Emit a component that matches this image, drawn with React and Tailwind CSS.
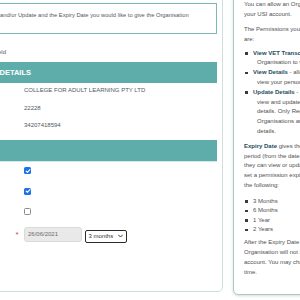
const Bullet = () => (
  <span className="absolute left-[-12px] top-[3.5px] w-[2.5px] h-[2.5px] bg-[#3a3a3a]" />
);

const Checkbox = ({ checked }) =>
  checked ? (
    <div className="w-[7px] h-[7px] rounded-[1.5px] bg-[#1a73e8] flex items-center justify-center">
      <svg width="6" height="6" viewBox="0 0 10 10" fill="none">
        <path d="M2 5.3l2 2L8.2 2.8" stroke="white" strokeWidth="1.8" strokeLinecap="round" strokeLinejoin="round" />
      </svg>
    </div>
  ) : (
    <div className="w-[7px] h-[7px] rounded-[1.5px] border border-[#8a8a8a] bg-white" />
  );

const App = () => {
  return (
    <div className="w-[300px] h-[300px] overflow-hidden bg-white font-['Liberation_Sans',Arial,sans-serif] text-[6px] leading-[10px]">
      <div className="flex items-start">
        {/* left form card */}
        <div className="-ml-[16px] -mt-[4px] w-[239px] h-[296px] shrink-0 border border-[#cfdfde] rounded-b-[5px] px-[5px] pt-[6px]">
          <div className="h-[31px] border border-[#79b9b6] pl-[9px] pt-[6px] text-[#4f585e] text-[5.75px] whitespace-nowrap">
            and/or Update and the Expiry Date you would like to give the Organisation
          </div>

          <div className="mt-[13px] w-[16px] flex justify-end whitespace-nowrap text-[#4f585e]">
            * Indicates mandatory field
          </div>

          <div className="mt-[5px] h-[21px] bg-[#5fadaa] flex items-center">
            <div className="w-[41px] flex justify-end whitespace-nowrap text-white font-bold text-[7.5px]">
              ORGANISATION DETAILS
            </div>
          </div>

          <div className="mt-[2px] pl-[34px] flex flex-col gap-[7.5px] text-[#4f585e]">
            <div>COLLEGE FOR ADULT LEARNING PTY LTD</div>
            <div>22228</div>
            <div>34207418594</div>
          </div>

          <div className="mt-[9.5px] h-[22px] bg-[#5fadaa] border-b border-[#d6e9e8]" />

          <div className="mt-[5.5px] pl-[34px] flex flex-col gap-[13.5px]">
            <Checkbox checked />
            <Checkbox checked />
            <Checkbox />
          </div>

          <div className="mt-[11.5px] pl-[25.5px] flex items-start">
            <span className="w-[8.5px] text-[#e53935] text-[8px] leading-[15px]">*</span>
            <div className="w-[58px] h-[15px] bg-[#e9e9ea] border border-[#dadada] rounded-[3px] pl-[3px] text-[#6b6b6b] leading-[13px]">
              26/06/2021
            </div>
            <div className="ml-[3px] mt-[3px] w-[42px] h-[13px] border border-[#2b2b2b] rounded-[2px] pl-[2.5px] pr-[3px] flex items-center justify-between text-[#333]">
              <span>3 months</span>
              <svg width="5" height="4" viewBox="0 0 10 7" fill="none">
                <path d="M1 1.5l4 4 4-4" stroke="#333" strokeWidth="2" strokeLinecap="round" strokeLinejoin="round" />
              </svg>
            </div>
          </div>
        </div>

        {/* right help card */}
        <div className="ml-[10px] -mt-[10px] w-[200px] shrink-0 border border-[#a5cbc8] rounded-[5px] pt-[9px] pl-[10px] pb-[16px] shadow-[0_1px_3px_rgba(0,0,0,0.15)] text-[#505050] leading-[9.8px] whitespace-nowrap">
          <p>
            You can allow an Organisation to view and/or update
            <br />
            your USI account.
          </p>
          <p className="mt-[5.5px]">
            The Permissions you can give to an Organisation
            <br />
            are:
          </p>
          <ul className="mt-[4px] pl-[13px]">
            <li className="relative indent-[-4px]">
              <Bullet />
              <span className="font-bold text-[#1f4c5b]">View VET Transcript</span> - allows the
              <br />
              Organisation to view your VET transcript.
            </li>
            <li className="relative indent-[-4px]">
              <Bullet />
              <span className="font-bold text-[#1f4c5b]">View Details</span> - allows the Organisation to
              <br />
              view your personal details.
            </li>
            <li className="relative indent-[-4px]">
              <Bullet />
              <span className="font-bold text-[#1f4c5b]">Update Details</span> - allows the Organisation to
              <br />
              view and update your personal
              <br />
              details. Only Registered Training
              <br />
              Organisations are able to update your
              <br />
              details.
            </li>
          </ul>
          <p className="mt-[5px]">
            <span className="font-bold text-[#1f4c5b]">Expiry Date</span> gives the Organisation a time
            <br />
            period (from the date you give permission)
            <br />
            they can view or update your account. You can
            <br />
            set a permission expiry date for one of
            <br />
            the following:
          </p>
          <ul className="mt-[6px] pl-[13px] leading-[9.4px]">
            {['3 Months', '6 Months', '1 Year', '2 Years'].map(t => (
              <li key={t} className="relative indent-[-4px]">
                <Bullet />
                {t}
              </li>
            ))}
          </ul>
          <p className="mt-[4px]">
            After the Expiry Date has passed, the
            <br />
            Organisation will not be able to access your
            <br />
            account. You may change permissions at any
            <br />
            time.
          </p>
        </div>
      </div>
    </div>
  );
};

export default App;
